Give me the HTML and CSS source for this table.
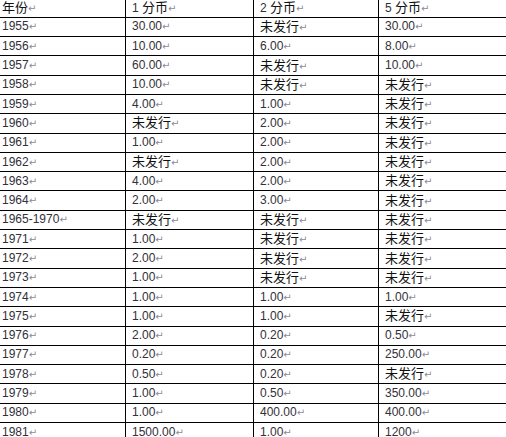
FILE: index.html
```html
<!DOCTYPE html>
<html>
<head>
<meta charset="utf-8">
<link rel="stylesheet" href="styles.css">
</head>
<body>
<div class="page">
<table class="coins">
<colgroup><col class="c1"><col class="c2"><col class="c3"><col class="c4"></colgroup>
<tr><td><span class="zh">年份</span><i>↵</i></td><td>1 <span class="zh">分币</span><i>↵</i></td><td>2 <span class="zh">分币</span><i>↵</i></td><td>5 <span class="zh">分币</span><i>↵</i></td></tr>
<tr><td>1955<i>↵</i></td><td>30.00<i>↵</i></td><td><span class="zh">未发行</span><i>↵</i></td><td>30.00<i>↵</i></td></tr>
<tr><td>1956<i>↵</i></td><td>10.00<i>↵</i></td><td>6.00<i>↵</i></td><td>8.00<i>↵</i></td></tr>
<tr><td>1957<i>↵</i></td><td>60.00<i>↵</i></td><td><span class="zh">未发行</span><i>↵</i></td><td>10.00<i>↵</i></td></tr>
<tr><td>1958<i>↵</i></td><td>10.00<i>↵</i></td><td><span class="zh">未发行</span><i>↵</i></td><td><span class="zh">未发行</span><i>↵</i></td></tr>
<tr><td>1959<i>↵</i></td><td>4.00<i>↵</i></td><td>1.00<i>↵</i></td><td><span class="zh">未发行</span><i>↵</i></td></tr>
<tr><td>1960<i>↵</i></td><td><span class="zh">未发行</span><i>↵</i></td><td>2.00<i>↵</i></td><td><span class="zh">未发行</span><i>↵</i></td></tr>
<tr><td>1961<i>↵</i></td><td>1.00<i>↵</i></td><td>2.00<i>↵</i></td><td><span class="zh">未发行</span><i>↵</i></td></tr>
<tr><td>1962<i>↵</i></td><td><span class="zh">未发行</span><i>↵</i></td><td>2.00<i>↵</i></td><td><span class="zh">未发行</span><i>↵</i></td></tr>
<tr><td>1963<i>↵</i></td><td>4.00<i>↵</i></td><td>2.00<i>↵</i></td><td><span class="zh">未发行</span><i>↵</i></td></tr>
<tr><td>1964<i>↵</i></td><td>2.00<i>↵</i></td><td>3.00<i>↵</i></td><td><span class="zh">未发行</span><i>↵</i></td></tr>
<tr><td>1965-1970<i>↵</i></td><td><span class="zh">未发行</span><i>↵</i></td><td><span class="zh">未发行</span><i>↵</i></td><td><span class="zh">未发行</span><i>↵</i></td></tr>
<tr><td>1971<i>↵</i></td><td>1.00<i>↵</i></td><td><span class="zh">未发行</span><i>↵</i></td><td><span class="zh">未发行</span><i>↵</i></td></tr>
<tr><td>1972<i>↵</i></td><td>2.00<i>↵</i></td><td><span class="zh">未发行</span><i>↵</i></td><td><span class="zh">未发行</span><i>↵</i></td></tr>
<tr><td>1973<i>↵</i></td><td>1.00<i>↵</i></td><td><span class="zh">未发行</span><i>↵</i></td><td><span class="zh">未发行</span><i>↵</i></td></tr>
<tr><td>1974<i>↵</i></td><td>1.00<i>↵</i></td><td>1.00<i>↵</i></td><td>1.00<i>↵</i></td></tr>
<tr><td>1975<i>↵</i></td><td>1.00<i>↵</i></td><td>1.00<i>↵</i></td><td><span class="zh">未发行</span><i>↵</i></td></tr>
<tr><td>1976<i>↵</i></td><td>2.00<i>↵</i></td><td>0.20<i>↵</i></td><td>0.50<i>↵</i></td></tr>
<tr><td>1977<i>↵</i></td><td>0.20<i>↵</i></td><td>0.20<i>↵</i></td><td>250.00<i>↵</i></td></tr>
<tr><td>1978<i>↵</i></td><td>0.50<i>↵</i></td><td>0.20<i>↵</i></td><td><span class="zh">未发行</span><i>↵</i></td></tr>
<tr><td>1979<i>↵</i></td><td>1.00<i>↵</i></td><td>0.50<i>↵</i></td><td>350.00<i>↵</i></td></tr>
<tr><td>1980<i>↵</i></td><td>1.00<i>↵</i></td><td>400.00<i>↵</i></td><td>400.00<i>↵</i></td></tr>
<tr><td>1981<i>↵</i></td><td>1500.00<i>↵</i></td><td>1.00<i>↵</i></td><td>1200<i>↵</i></td></tr>
</table>
</div>
</body>
</html>
```

FILE: styles.css
```css
html, body {
  margin: 0;
  padding: 0;
  background: #ffffff;
}
.page {
  width: 506px;
  height: 437px;
  overflow: hidden;
}
.coins {
  border-collapse: collapse;
  table-layout: fixed;
  width: 540px;
  margin-left: -3px;
  margin-top: -2.5px;
  font-family: "Liberation Sans", "Noto Sans CJK SC", sans-serif;
  font-size: 12px;
  color: #333038;
}
.c1 { width: 128px; }
.c2 { width: 128px; }
.c3 { width: 125px; }
.c4 { width: 159px; }
.coins tr {
  height: 19.3px;
}
.coins td {
  border: 1px solid #000000;
  padding: 0 0 0 6px;
  vertical-align: middle;
  white-space: nowrap;
  line-height: 14px;
  overflow: hidden;
}
.coins td:first-child {
  padding-left: 4px;
}
.zh {
  font-family: "Noto Sans CJK SC", sans-serif;
  font-size: 13px;
  color: #111111;
}
.coins i {
  font-style: normal;
  font-family: "DejaVu Sans", sans-serif;
  font-size: 10px;
  color: #8e8898;
}
```
